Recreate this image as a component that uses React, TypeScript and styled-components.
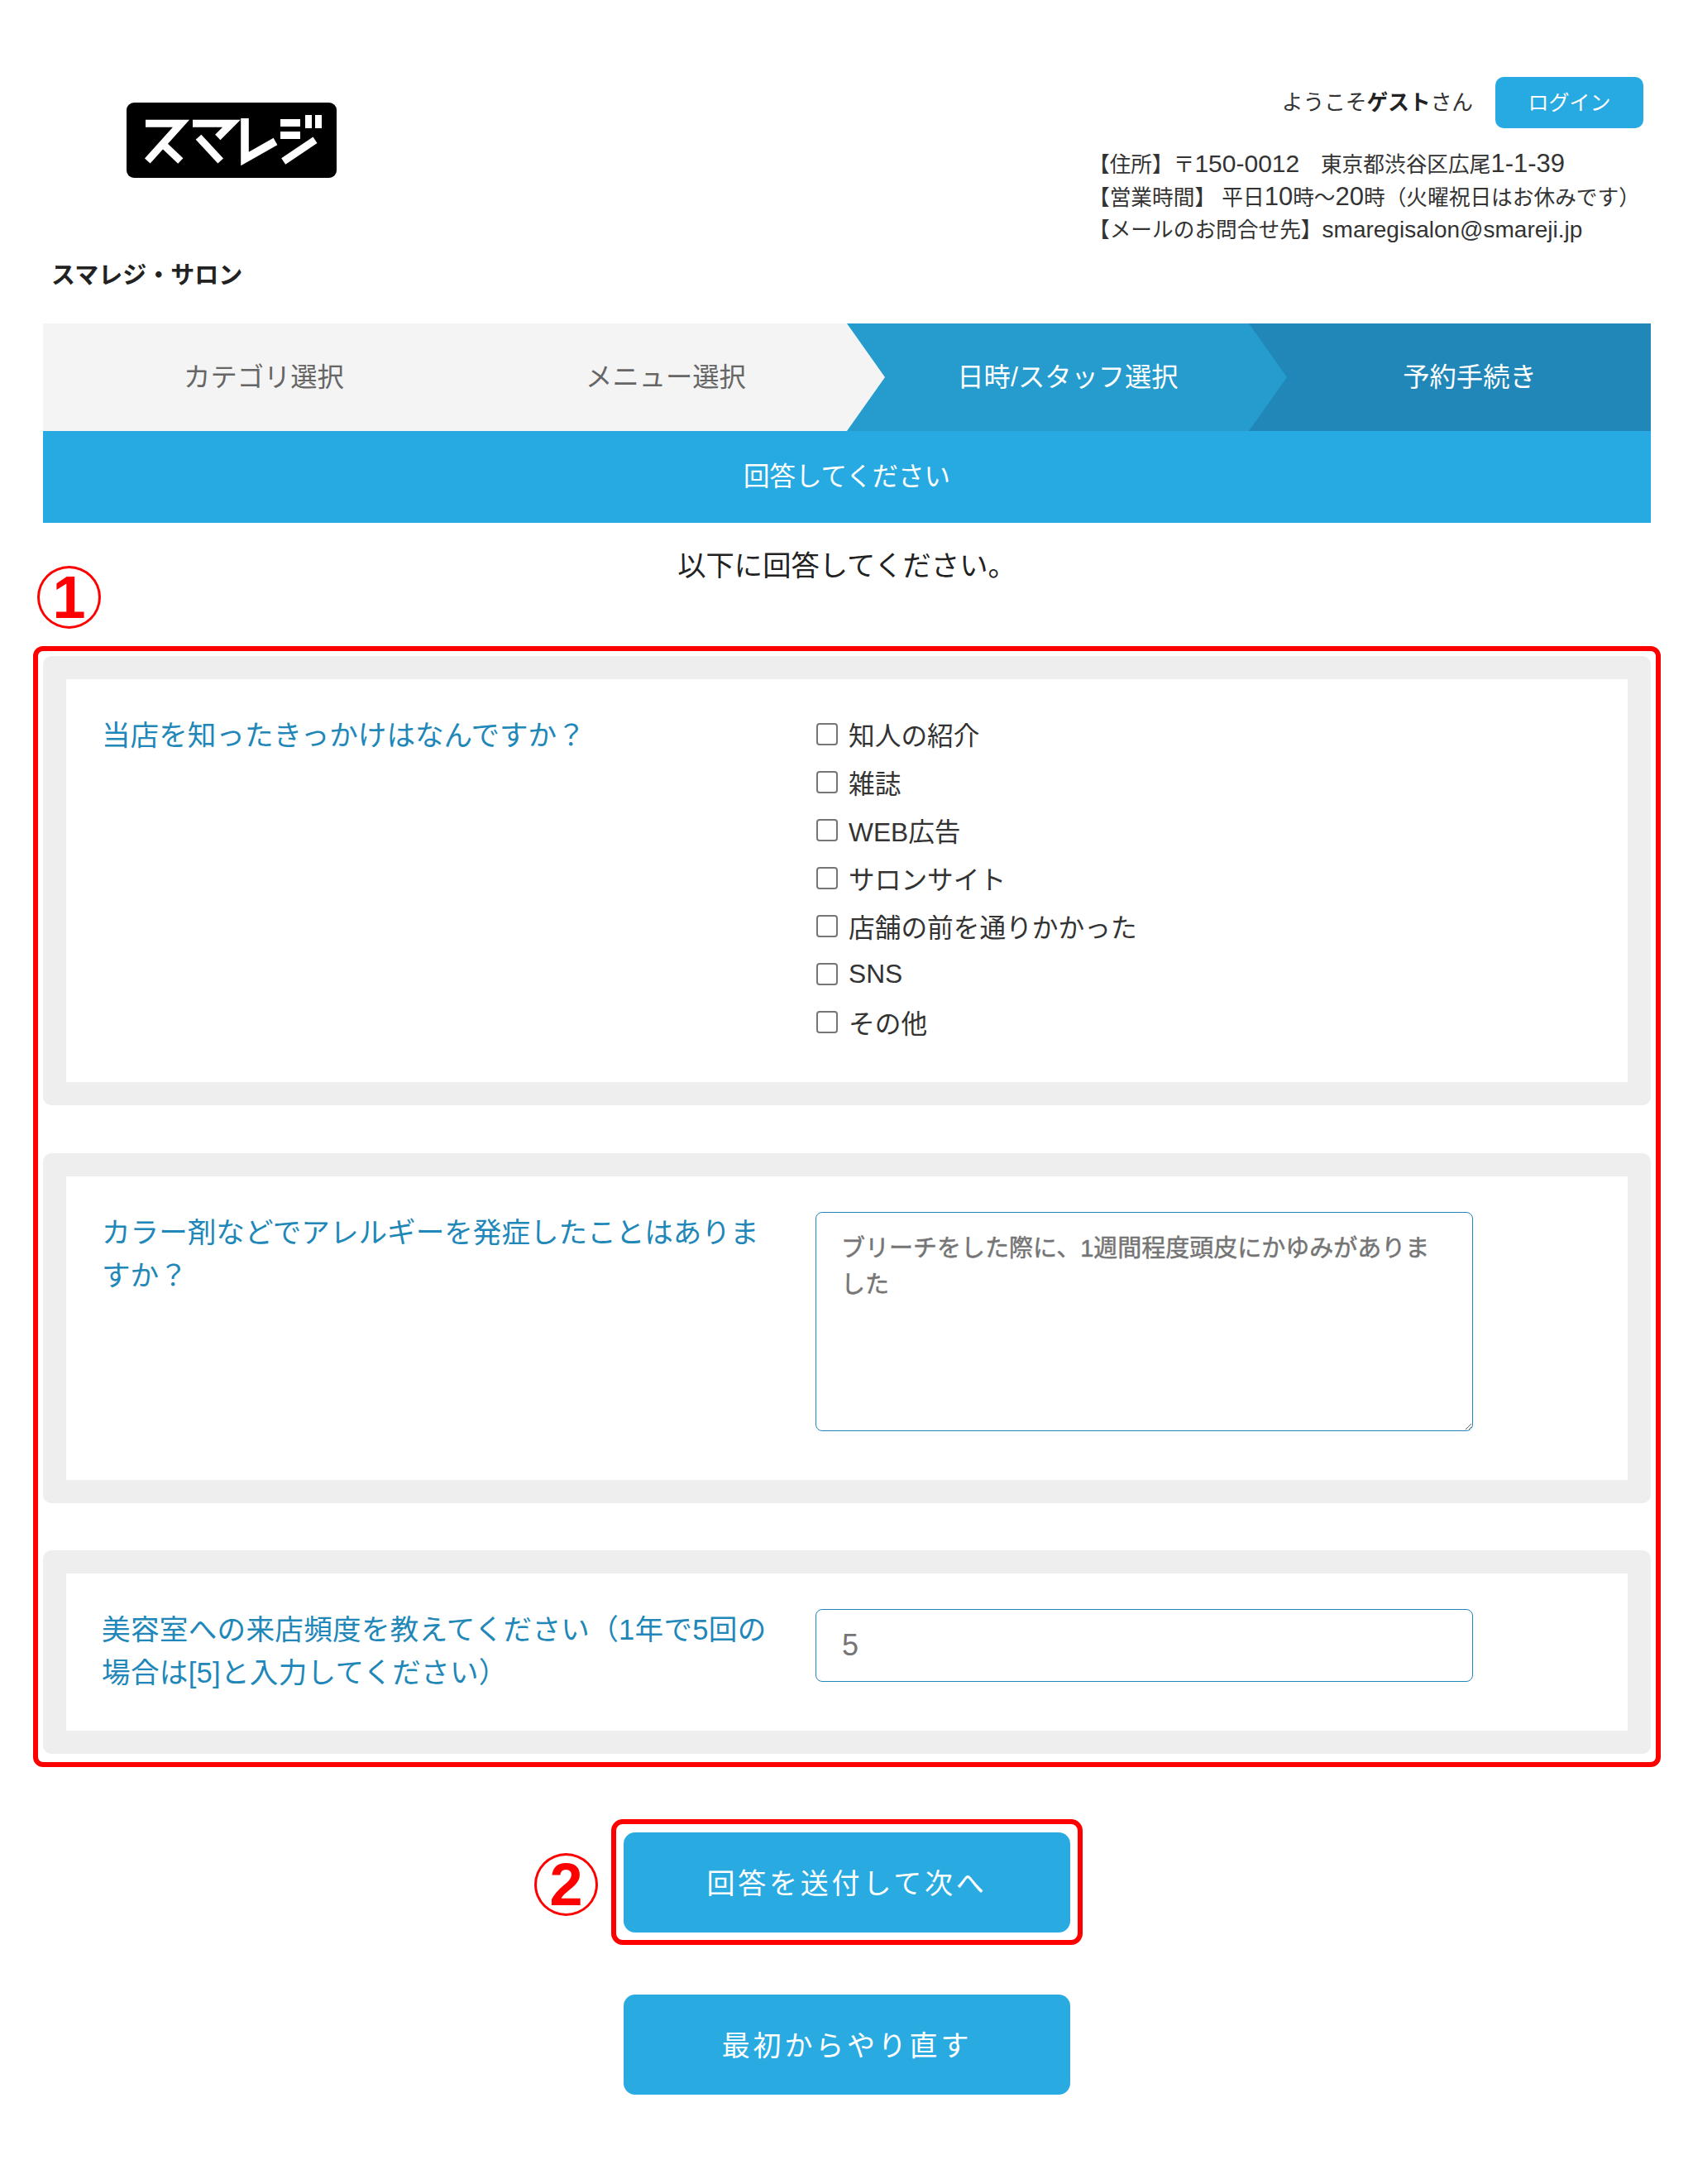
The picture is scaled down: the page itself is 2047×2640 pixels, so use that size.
import React from "react";
import styled, { createGlobalStyle } from "styled-components";

const FONT = `"Liberation Sans", "Noto Sans CJK JP", sans-serif`;

const GlobalStyle = createGlobalStyle`
    html, body {
        margin: 0;
        padding: 0;
        background: #fff;
    }
    body {
        font-family: ${FONT};
        color: #333;
    }
`;

const steps = [
    { label: "カテゴリ選択", bg: "#f4f4f4", color: "#666" },
    { label: "メニュー選択", bg: "#f4f4f4", color: "#666" },
    { label: "日時/スタッフ選択", bg: "#259ccd", color: "#fff" },
    { label: "予約手続き", bg: "#2087b8", color: "#fff" },
];

const choices = ["知人の紹介", "雑誌", "WEB広告", "サロンサイト", "店舗の前を通りかかった", "SNS", "その他"];

export default function App() {
    return (
        <Page>
            <GlobalStyle />
            <Header>
                <Brand>
                    <Logo viewBox="0 0 254 91" aria-label="スマレジ">
                        <rect width="254" height="91" rx="9" fill="#000" />
                        <g fill="none" stroke="#fff" strokeWidth="9">
                            <polyline points="23,25.3 66,25.3 25.3,70.5" />
                            <line x1="43.7" y1="50" x2="65.3" y2="70.5" />
                            <polyline points="80,25.3 127,25.3 110.3,42" />
                            <line x1="87" y1="41.7" x2="113.7" y2="70.5" />
                            <polyline points="143,19 143,68 180,47" strokeWidth="9.6" />
                            <line x1="186" y1="24.5" x2="210" y2="24.5" />
                            <line x1="186" y1="39.5" x2="210" y2="39.5" />
                            <line x1="220" y1="15" x2="220" y2="31" strokeWidth="8" />
                            <line x1="232" y1="15" x2="232" y2="31" strokeWidth="8" />
                            <line x1="189.7" y1="71" x2="228" y2="45.3" />
                        </g>
                    </Logo>
                    <ShopName>スマレジ・サロン</ShopName>
                </Brand>
                <Account>
                    <Welcome>
                        <span>
                            ようこそ<b>ゲスト</b>さん
                        </span>
                        <LoginButton>ログイン</LoginButton>
                    </Welcome>
                    <ShopInfo>
                        <div>
                            【住所】〒<Latin $size={30}>150-0012</Latin>　東京都渋谷区広尾<Latin $size={31}>1-1-39</Latin>
                        </div>
                        <div>
                            【営業時間】 平日<Latin $size={31}>10</Latin>時～<Latin $size={31}>20</Latin>時（火曜祝日はお休みです）
                        </div>
                        <div>
                            【メールのお問合せ先】<Latin $size={28}>smaregisalon@smareji.jp</Latin>
                        </div>
                    </ShopInfo>
                </Account>
            </Header>

            <StepBar>
                {steps.map((step) => (
                    <Step key={step.label} $bg={step.bg} $color={step.color}>
                        {step.label}
                    </Step>
                ))}
            </StepBar>
            <TitleBar>回答してください</TitleBar>

            <Intro>
                <Marker $left={-7} $top={52}>
                    1
                </Marker>
                以下に回答してください。
            </Intro>

            <QuestionFrame>
                <Card>
                    <Row>
                        <Question>当店を知ったきっかけはなんですか？</Question>
                        <Checklist>
                            {choices.map((choice) => (
                                <Choice key={choice}>
                                    <input type="checkbox" />
                                    {choice}
                                </Choice>
                            ))}
                        </Checklist>
                    </Row>
                </Card>
                <Card>
                    <Row>
                        <Question>カラー剤などでアレルギーを発症したことはありますか？</Question>
                        <TextArea readOnly defaultValue="ブリーチをした際に、1週間程度頭皮にかゆみがありました" />
                    </Row>
                </Card>
                <Card>
                    <Row>
                        <Question $spacing={0.3}>美容室への来店頻度を教えてください（1年で5回の場合は[5]と入力してください）</Question>
                        <TextInput readOnly defaultValue="5" />
                    </Row>
                </Card>
            </QuestionFrame>

            <Actions>
                <SubmitFrame>
                    <Marker $left={-99} $top={35}>
                        2
                    </Marker>
                    <ActionButton>回答を送付して次へ</ActionButton>
                </SubmitFrame>
                <ActionButton>最初からやり直す</ActionButton>
            </Actions>
        </Page>
    );
}

const Page = styled.div`
    box-sizing: border-box;
    width: 2047px;
    height: 2640px;
    padding: 0 51px 0 52px;
    overflow: hidden;
`;

const Header = styled.header`
    display: flex;
    justify-content: space-between;
    height: 391px;
`;

const Brand = styled.div`
    display: flex;
    flex-direction: column;
    padding-top: 124px;
`;

const Logo = styled.svg`
    display: block;
    width: 254px;
    height: 91px;
    margin-left: 101px;
`;

const ShopName = styled.div`
    margin: 98px 0 0 10px;
    font-size: 29px;
    font-weight: 700;
    line-height: 40px;
    color: #222;
`;

const Account = styled.div`
    display: flex;
    flex-direction: column;
    width: 671px;
    margin-right: 9px;
    padding-top: 93px;
`;

const Welcome = styled.div`
    display: flex;
    align-items: center;
    justify-content: flex-end;
    gap: 27px;
    font-size: 25.7px;
    color: #333;

    span {
        margin-top: -5px;
    }

    b {
        color: #222;
    }
`;

const LoginButton = styled.button`
    width: 179px;
    height: 62px;
    padding: 0 0 5px;
    border: 0;
    border-radius: 10px;
    background: #27aae1;
    color: #fff;
    font-family: inherit;
    font-size: 25px;
`;

const ShopInfo = styled.div`
    margin-top: 25px;
    font-size: 25.7px;
    line-height: 39.5px;
    white-space: nowrap;
    color: #333;
`;

const Latin = styled.span<{ $size: number }>`
    font-size: ${(props) => props.$size}px;
    line-height: 1;
`;

const StepBar = styled.div`
    display: flex;
    height: 130px;
`;

const Step = styled.div<{ $bg: string; $color: string }>`
    position: relative;
    flex: 1;
    box-sizing: border-box;
    display: flex;
    align-items: center;
    justify-content: center;
    padding: 0 0 6px 48px;
    background: ${(props) => props.$bg};
    color: ${(props) => props.$color};
    font-size: 32.3px;

    &:not(:last-child)::after {
        content: "";
        position: absolute;
        z-index: 1;
        top: 0;
        left: 100%;
        width: 46px;
        height: 100%;
        background: ${(props) => props.$bg};
        clip-path: polygon(0 0, 100% 50%, 0 100%);
    }
`;

const TitleBar = styled.div`
    display: flex;
    align-items: center;
    justify-content: center;
    box-sizing: border-box;
    height: 111px;
    padding-bottom: 7px;
    background: #27aae1;
    color: #fff;
    font-size: 31.5px;
`;

const Intro = styled.div`
    position: relative;
    height: 149px;
    padding-top: 30px;
    box-sizing: border-box;
    font-size: 34.3px;
    line-height: 44px;
    text-align: center;
    color: #222;
`;

const Marker = styled.span<{ $left: number; $top: number }>`
    position: absolute;
    left: ${(props) => props.$left}px;
    top: ${(props) => props.$top}px;
    box-sizing: border-box;
    display: flex;
    align-items: center;
    justify-content: center;
    width: 77px;
    height: 76px;
    border: 3px solid #f00;
    border-radius: 50%;
    color: #f00;
    font-family: "Liberation Sans", sans-serif;
    font-size: 72px;
    font-weight: 700;
    line-height: 1;
`;

const QuestionFrame = styled.div`
    display: flex;
    flex-direction: column;
    gap: 57.5px;
    margin: 0 -12px;
    padding: 6px 6px 10px;
    border: 6px solid #f00;
    border-radius: 12px;
`;

const Card = styled.section`
    padding: 28px;
    border-radius: 10px;
    background: #eee;
`;

const Row = styled.div`
    display: grid;
    grid-template-columns: 810px 795px;
    column-gap: 52px;
    align-items: start;
    padding: 43px 44px;
    background: #fff;
`;

const Question = styled.div<{ $spacing?: number }>`
    margin: -1px 0 0 -1px;
    font-size: 34.6px;
    line-height: 52px;
    letter-spacing: ${(props) => props.$spacing ?? 0}px;
    color: #2087b8;
`;

const Checklist = styled.div`
    display: flex;
    flex-direction: column;
    margin-top: -5px;
`;

const Choice = styled.label`
    display: flex;
    align-items: center;
    gap: 13px;
    box-sizing: border-box;
    height: 58px;
    padding-bottom: 2px;
    font-size: 31.7px;
    color: #333;

    input {
        appearance: none;
        box-sizing: border-box;
        width: 26px;
        height: 27px;
        margin: 0 0 0 1px;
        border: 2px solid #767676;
        border-radius: 4px;
        background: #fff;
    }
`;

const fieldStyle = `
    display: block;
    box-sizing: border-box;
    width: 795px;
    margin-bottom: 16px;
    border: 1.5px solid #2087b8;
    border-radius: 8px;
    background: #fff;
    outline: none;
    color: #757575;
    font-family: ${FONT};
`;

const TextArea = styled.textarea`
    ${fieldStyle}
    height: 265px;
    padding: 21px 30px;
    font-size: 29px;
    line-height: 44px;
    -webkit-text-stroke: 0.5px #757575;
`;

const TextInput = styled.input`
    ${fieldStyle}
    height: 88px;
    padding: 0 31px;
    font-size: 36px;
`;

const Actions = styled.div`
    display: flex;
    flex-direction: column;
    align-items: center;
    gap: 60px;
    margin-top: 63px;
`;

const SubmitFrame = styled.div`
    position: relative;
    padding: 10px 9px 9px;
    border: 6px solid #f00;
    border-radius: 14px;
`;

const ActionButton = styled.button`
    display: block;
    width: 540px;
    height: 121px;
    padding: 0 0 2px;
    border: 0;
    border-radius: 14px;
    background: #29abe2;
    color: #fff;
    font-family: inherit;
    font-size: 34px;
    letter-spacing: 3.8px;
`;
